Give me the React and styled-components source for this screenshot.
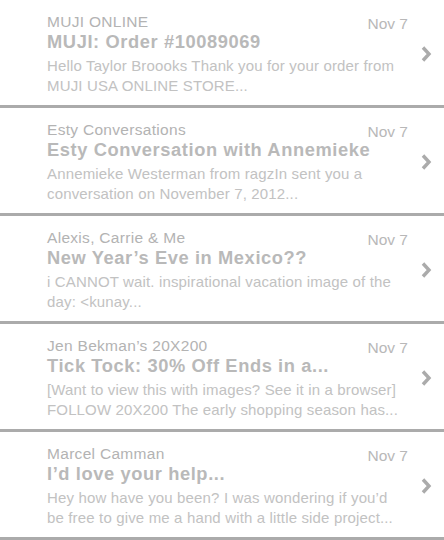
import React from "react";
import styled, { createGlobalStyle } from "styled-components";

const GlobalStyle = createGlobalStyle`
  html, body {
    margin: 0;
    padding: 0;
    background: #fff;
  }
  body {
    font-family: "Liberation Sans", Arial, sans-serif;
    -webkit-font-smoothing: antialiased;
  }
`;

const messages = [
  {
    from: "MUJI ONLINE",
    date: "Nov 7",
    subject: "MUJI: Order #10089069",
    preview: [
      "Hello Taylor Broooks Thank you for your order from",
      "MUJI USA ONLINE STORE...",
    ],
  },
  {
    from: "Esty Conversations",
    date: "Nov 7",
    subject: "Esty Conversation with Annemieke",
    preview: [
      "Annemieke Westerman from ragzIn sent you a",
      "conversation on November 7, 2012...",
    ],
  },
  {
    from: "Alexis, Carrie & Me",
    date: "Nov 7",
    subject: "New Year’s Eve in Mexico??",
    preview: [
      "i CANNOT wait. inspirational vacation image of the",
      "day: <kunay...",
    ],
  },
  {
    from: "Jen Bekman’s 20X200",
    date: "Nov 7",
    subject: "Tick Tock: 30% Off Ends in a...",
    preview: [
      "[Want to view this with images? See it in a browser]",
      "FOLLOW 20X200 The early shopping season has...",
    ],
  },
  {
    from: "Marcel Camman",
    date: "Nov 7",
    subject: "I’d love your help...",
    preview: [
      "Hey how have you been? I was wondering if you’d",
      "be free to give me a hand with a little side project...",
    ],
  },
];

const Chevron = () => (
  <svg width="12" height="18" viewBox="0 0 12 18">
    <polyline
      points="3,2.5 9,9 3,15.5"
      fill="none"
      stroke="#ababab"
      strokeWidth="3.4"
      strokeLinecap="butt"
      strokeLinejoin="miter"
    />
  </svg>
);

const App = () => {
  return (
    <>
      <GlobalStyle />
      <List>
        {messages.map((m, i) => (
          <Row key={i}>
            <Content>
              <Header>
                <Sender>{m.from}</Sender>
                <DateLabel>{m.date}</DateLabel>
              </Header>
              <Subject>{m.subject}</Subject>
              <Preview>
                {m.preview.map((line, j) => (
                  <span key={j}>{line}</span>
                ))}
              </Preview>
            </Content>
            <Arrow>
              <Chevron />
            </Arrow>
          </Row>
        ))}
      </List>
    </>
  );
};

const List = styled.ul`
  list-style: none;
  margin: 0;
  padding: 0;
  width: 444px;
`;

const Row = styled.li`
  display: flex;
  align-items: stretch;
  height: 105px;
  border-bottom: 3px solid #ababab;
  box-sizing: content-box;
`;

const Content = styled.div`
  flex: 1;
  padding: 11px 0 0 47px;
  min-width: 0;
`;

const Header = styled.div`
  display: flex;
  justify-content: space-between;
  align-items: flex-end;
  height: 20px;
`;

const Sender = styled.span`
  font-size: 15.5px;
  letter-spacing: 0.3px;
  color: #b3b3b3;
  line-height: 18px;
`;

const DateLabel = styled.span`
  font-size: 15.5px;
  color: #b8b8b8;
  line-height: 18px;
  transform: translateY(2px);
`;

const Subject = styled.div`
  font-size: 18.3px;
  font-weight: 700;
  letter-spacing: 0.6px;
  color: #b9b9b9;
  line-height: 22px;
  white-space: nowrap;
`;

const Preview = styled.p`
  margin: 3px 0 0;
  font-size: 15px;
  letter-spacing: 0.15px;
  line-height: 20px;
  color: #c2c2c2;
  span {
    display: block;
    white-space: nowrap;
  }
`;

const Arrow = styled.div`
  width: 36px;
  display: flex;
  align-items: center;
  justify-content: center;
  padding-top: 2px;
`;

export default App;
